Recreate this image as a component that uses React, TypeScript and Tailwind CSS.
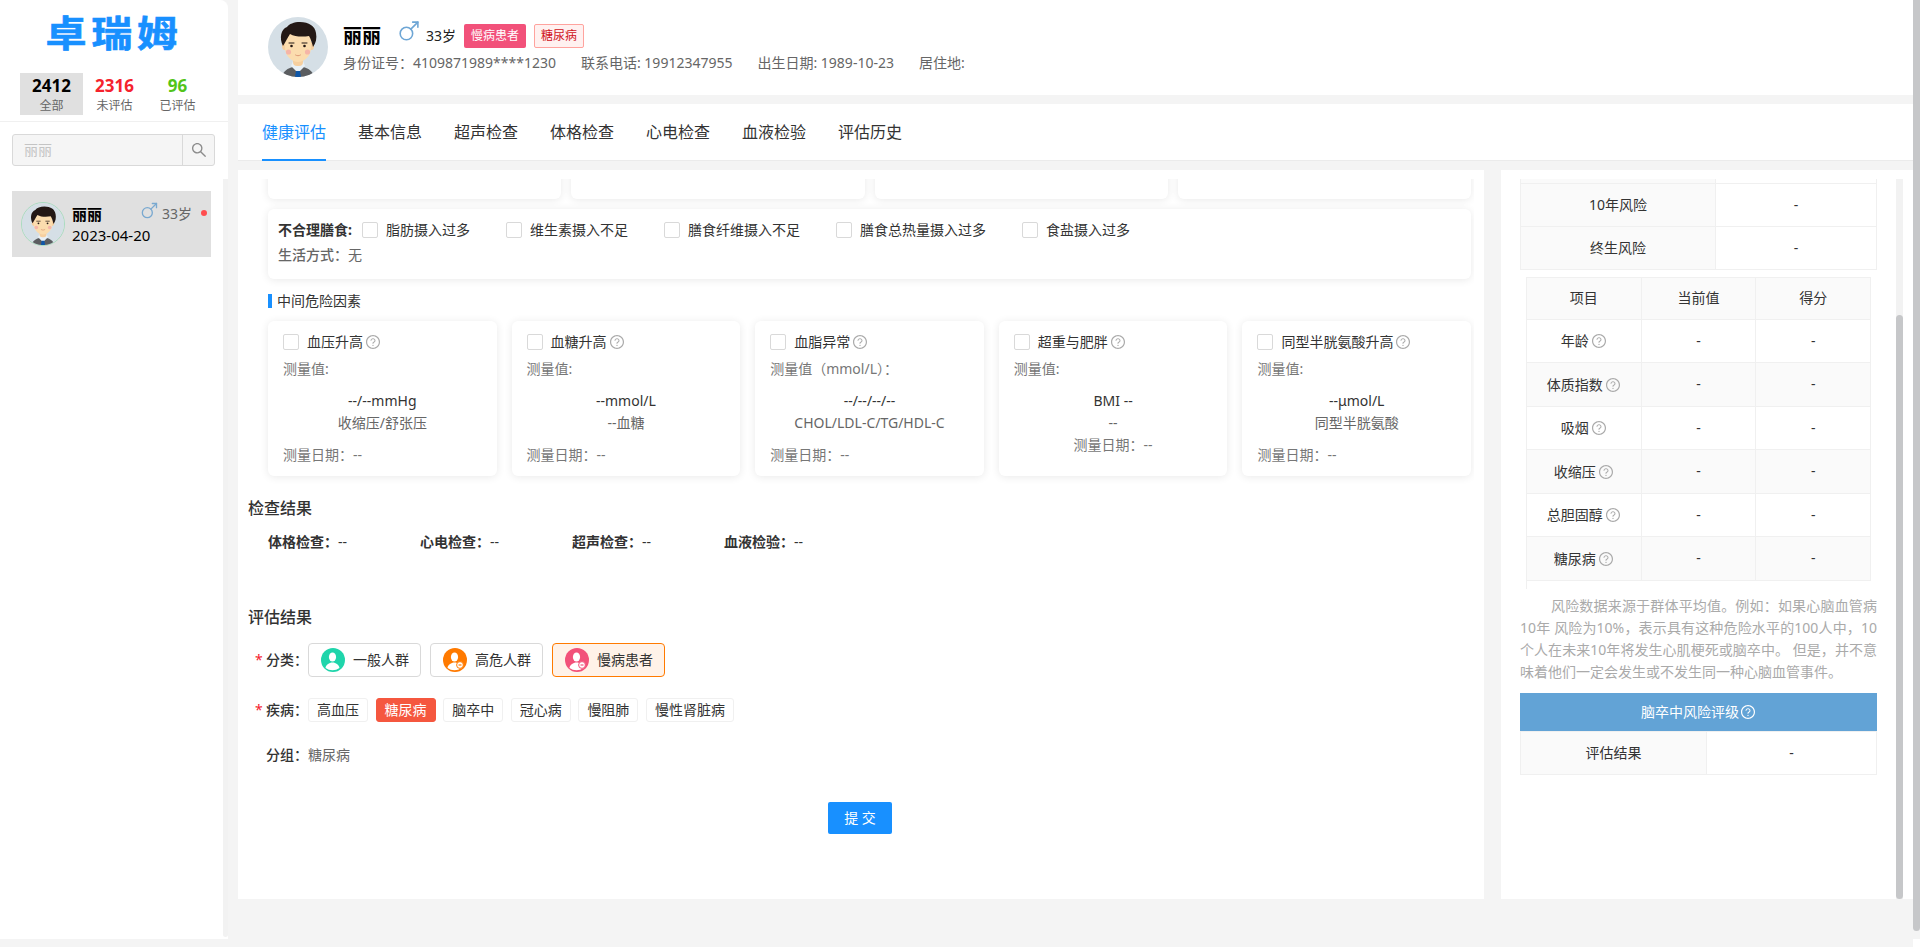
import { Mars } from "lucide-react";
import { AiOutlineQuestionCircle, AiOutlineSearch } from "react-icons/ai";

const dietItems = ["脂肪摄入过多", "维生素摄入不足", "膳食纤维摄入不足", "膳食总热量摄入过多", "食盐摄入过多"];

const riskCards = [
  { title: "血压升高", label: "测量值:", value: "--/--mmHg", sub: "收缩压/舒张压" },
  { title: "血糖升高", label: "测量值:", value: "--mmol/L", sub: "--血糖" },
  { title: "血脂异常", label: "测量值（mmol/L）：", value: "--/--/--/--", sub: "CHOL/LDL-C/TG/HDL-C" },
  { title: "超重与肥胖", label: "测量值:", value: "BMI --", sub: "--", centered: true },
  { title: "同型半胱氨酸升高", label: "测量值:", value: "--μmol/L", sub: "同型半胱氨酸" },
];

const checks = ["体格检查", "心电检查", "超声检查", "血液检验"];
const diseases = ["高血压", "糖尿病", "脑卒中", "冠心病", "慢阻肺", "慢性肾脏病"];
const tabs = ["健康评估", "基本信息", "超声检查", "体格检查", "心电检查", "血液检验", "评估历史"];
const scoreRows = ["年龄", "体质指数", "吸烟", "收缩压", "总胆固醇", "糖尿病"];

function Avatar({ className }: { className: string }) {
  return (
    <svg viewBox="0 0 60 60" className={className}>
      <defs>
        <clipPath id="avatar-clip">
          <circle cx="30" cy="30" r="30" />
        </clipPath>
      </defs>
      <g clipPath="url(#avatar-clip)">
        <rect width="60" height="60" fill="#d5dfe6" />
        <path d="M14 60c1-6 6-9 11-10h10c5 1 10 4 11 10z" fill="#5b5d60" />
        <path d="M23 49l7 7 7-7-2-5H25z" fill="#e8f0f6" />
        <path d="M28 54h4l1 6h-6z" fill="#0f57a8" />
        <rect x="25" y="38" width="10" height="11" rx="4" fill="#f6cf9f" />
        <ellipse cx="16.5" cy="29" rx="2.5" ry="4" fill="#f6cf9f" />
        <ellipse cx="43.5" cy="29" rx="2.5" ry="4" fill="#f6cf9f" />
        <path d="M17 23c0-6 6-9 13-9s13 3 13 9v8c0 8-7 14-13 14S17 39 17 31z" fill="#fbdcae" />
        <path d="M15 29C11 21 13 12 19 10c2-3 7-5 13-5 9 0 15 4 16 11 1 5 0 10-3 14-1-4-2-8-4-11-6 1-14 1-19-2-2 3-4 7-7 12z" fill="#231815" />
        <path d="M21 26h5M34 26h5" stroke="#231815" strokeWidth="1" strokeLinecap="round" />
        <circle cx="23.5" cy="29" r="1.3" fill="#231815" />
        <circle cx="36.5" cy="29" r="1.3" fill="#231815" />
        <circle cx="20.5" cy="35" r="2.6" fill="#f5b5a8" />
        <circle cx="39.5" cy="35" r="2.6" fill="#f5b5a8" />
        <path d="M27.5 38c1.5 1 3.5 1 5 0" stroke="#d68a6a" strokeWidth="0.8" fill="none" strokeLinecap="round" />
      </g>
    </svg>
  );
}

function HelpIcon({ className = "text-[#aaaaaa]" }: { className?: string }) {
  return <AiOutlineQuestionCircle className={`w-4 h-4 shrink-0 ${className}`} />;
}

function Checkbox() {
  return <span className="w-4 h-4 shrink-0 bg-white border border-[#d9d9d9] rounded-[2px]" />;
}

function PersonIcon({ color, badge }: { color: string; badge?: string }) {
  return (
    <svg viewBox="0 0 24 24" className="w-6 h-6 shrink-0">
      <circle cx="12" cy="12" r="12" fill={color} />
      <ellipse cx="11.5" cy="9" rx="3.6" ry="4.6" fill="#fff" />
      <path d="M4.5 20c.5-3.5 3.5-4.5 5.5-5.5h3c2 1 5 2 5.5 5.5a12 12 0 0 1-14 0z" fill="#fff" />
      {badge && <circle cx="17" cy="17" r="3.4" fill="#fff" stroke={color} strokeWidth="1" />}
      {badge && <path d="M15.5 17h3" stroke={color} strokeWidth="1.2" />}
    </svg>
  );
}

function Sidebar() {
  return (
    <aside className="w-[228px] shrink-0 bg-white rounded-tr-lg flex flex-col">
      <div className="h-[73px] flex items-center justify-center pb-[6px]">
        <span className="text-[36px] leading-none font-bold text-[#1890ff] tracking-[4px] scale-x-[1.14] [-webkit-text-stroke:0.6px_#1890ff]">卓瑞姆</span>
      </div>
      <div className="h-[49px] px-5 border-b border-[#f0f0f0]">
        <div className="grid grid-cols-[63px_63px_63px] text-center h-[42px]">
          <div className="bg-[#e0e0e0]">
            <div className="text-[17px] leading-[22px] pt-[2px] font-bold text-black">2412</div>
            <div className="text-xs leading-[18px] text-[#666666]">全部</div>
          </div>
          <div>
            <div className="text-[17px] leading-[22px] pt-[2px] font-bold text-[#f5222d]">2316</div>
            <div className="text-xs leading-[18px] text-[#666666]">未评估</div>
          </div>
          <div>
            <div className="text-[17px] leading-[22px] pt-[2px] font-bold text-[#52c41a]">96</div>
            <div className="text-xs leading-[18px] text-[#666666]">已评估</div>
          </div>
        </div>
      </div>
      <div className="h-[57px] pl-3 pr-[13px] pt-3">
        <div className="h-[32px] flex bg-[#f5f5f5] border border-[#d9d9d9] rounded-[3px]">
          <span className="flex-1 pl-[11px] text-sm leading-[30px] text-[#c4c4c4]">丽丽</span>
          <span className="w-[32px] border-l border-[#d9d9d9] flex items-center justify-center">
            <AiOutlineSearch className="w-[18px] h-[18px] text-[#8c8c8c]" />
          </span>
        </div>
      </div>
      <div className="flex-1 flex">
        <div className="flex-1 pt-[12px] pl-3 pr-3">
          <div className="h-[66px] w-[199px] bg-[#e0e0e0] flex items-center pl-[9px] pr-1">
            <div className="w-[44px] h-[44px] rounded-full border border-[#a9dcc0] shrink-0">
              <Avatar className="w-full h-full" />
            </div>
            <div className="flex-1 ml-[7px]">
              <div className="flex items-center h-[22px]">
                <span className="text-[15px] font-bold text-black">丽丽</span>
                <Mars size={20} strokeWidth={1.6} className="ml-auto -mt-[6px] text-[#7aa9d0]" />
                <span className="ml-[3px] text-sm text-[#666666]">33岁</span>
                <span className="ml-[9px] w-[6px] h-[6px] rounded-full bg-[#ff4d4f] -mt-[3px]" />
              </div>
              <div className="text-[15px] leading-[20px] text-black">2023-04-20</div>
            </div>
          </div>
        </div>
        <div className="w-[5px] bg-[#f2f2f2] mb-[2px] rounded-b-sm" />
      </div>
    </aside>
  );
}

function PatientHeader() {
  return (
    <header className="h-[95px] bg-white flex pl-[30px] pt-[17px]">
      <Avatar className="w-[60px] h-[60px] shrink-0" />
      <div className="ml-[15px] pt-[7px]">
        <div className="flex items-center h-[24px]">
          <span className="text-[19px] font-bold text-black">丽丽</span>
          <Mars size={25} strokeWidth={1.5} className="ml-[15px] -mt-[9px] text-[#6ea6d5]" />
          <span className="ml-[5px] text-sm text-[#222222]">33岁</span>
          <span className="ml-2 w-[62px] h-[24px] bg-[#f2517a] rounded-[2px] text-xs leading-[24px] text-white text-center">慢病患者</span>
          <span className="ml-2 w-[50px] h-[24px] bg-[#fff1f0] border border-[#ffa39e] rounded-[2px] text-xs leading-[22px] text-[#cf1322] text-center">糖尿病</span>
        </div>
        <div className="mt-[5px] flex gap-[25px] text-sm leading-5 text-[#666666]">
          <span>身份证号：4109871989****1230</span>
          <span>联系电话: 19912347955</span>
          <span>出生日期: 1989-10-23</span>
          <span>居住地:</span>
        </div>
      </div>
    </header>
  );
}

function Tabs() {
  return (
    <nav className="mt-[9px] h-[57px] bg-white border-b border-[#ebebeb] flex gap-8 pl-6">
      {tabs.map((tab, i) => (
        <div
          key={tab}
          className={
            i === 0
              ? "h-[57px] flex items-center text-base text-[#1890ff] border-b-2 border-[#1890ff]"
              : "h-[56px] flex items-center text-base text-[#333333]"
          }
        >
          {tab}
        </div>
      ))}
    </nav>
  );
}

function RiskCard({ card }: { card: (typeof riskCards)[number] }) {
  return (
    <div className="h-[155px] bg-white rounded-md shadow-[0_1px_8px_rgba(0,0,0,0.09)] pt-[13px] pl-[15px]">
      <div className="flex items-center h-4">
        <Checkbox />
        <span className="ml-2 text-sm text-[#333333]">{card.title}</span>
        <span className="ml-[2px]">
          <HelpIcon />
        </span>
      </div>
      <div className="mt-[9px] h-5 text-sm leading-5 text-[#777777]">{card.label}</div>
      <div className="-ml-[15px] mt-3 text-center text-sm leading-5 text-[#333333]">{card.value}</div>
      <div className="-ml-[15px] mt-[2px] text-center text-sm leading-5 text-[#666666]">{card.sub}</div>
      {card.centered ? (
        <div className="-ml-[15px] mt-[2px] text-center text-sm leading-5 text-[#777777]">测量日期：--</div>
      ) : (
        <div className="mt-3 text-sm leading-5 text-[#777777]">测量日期：--</div>
      )}
    </div>
  );
}

function AssessmentPanel() {
  return (
    <section className="w-[1246px] bg-white pt-[9px] px-[10px]">
      <div className="h-[720px] overflow-hidden">
        <div className="pl-5 pr-[3px]">
          <div className="grid grid-cols-4 gap-[10px] h-5">
            {[0, 1, 2, 3].map((n) => (
              <div key={n} className="h-[40px] -mt-5 bg-white rounded-md shadow-[0_1px_8px_rgba(0,0,0,0.09)]" />
            ))}
          </div>
          <div className="mt-[10px] h-[70px] bg-white rounded-md shadow-[0_1px_8px_rgba(0,0,0,0.09)] pt-[11px] pl-[10px]">
            <div className="flex items-center h-5 text-sm text-[#333333]">
              <span className="w-[84px] font-bold">不合理膳食:</span>
              {dietItems.map((item) => (
                <span key={item} className="flex items-center mr-9">
                  <Checkbox />
                  <span className="ml-2">{item}</span>
                </span>
              ))}
            </div>
            <div className="mt-[5px] h-5 text-sm leading-5 text-[#666666]">
              <span className="font-medium">生活方式：</span>无
            </div>
          </div>
          <div className="mt-[15px] flex items-center h-[14px]">
            <span className="w-1 h-[14px] bg-[#1890ff]" />
            <span className="ml-[5px] text-sm text-[#333333]">中间危险因素</span>
          </div>
          <div className="mt-[13px] grid grid-cols-5 gap-[15px]">
            {riskCards.map((card) => (
              <RiskCard key={card.title} card={card} />
            ))}
          </div>
        </div>

        <h2 className="mt-5 h-6 text-base leading-6 font-medium text-[#333333]">检查结果</h2>
        <div className="mt-3 pl-5 flex h-5 text-sm leading-5 text-[#333333]">
          {checks.map((check) => (
            <span key={check} className="w-[152px]">
              <span className="font-bold">{check}：</span>--
            </span>
          ))}
        </div>

        <h2 className="mt-[53px] h-6 text-base leading-6 font-medium text-[#333333]">评估结果</h2>
        <div className="mt-[14px] flex items-center pl-[7px] h-[34px]">
          <span className="w-[11px] text-sm text-[#f5222d]">*</span>
          <span className="w-[42px] text-sm font-medium text-[#333333]">分类：</span>
          <div className="flex gap-[9px]">
            <div className="w-[113px] h-[34px] flex items-center pl-3 gap-2 bg-white border border-[#d9d9d9] rounded text-sm text-[#333333]">
              <PersonIcon color="#1fd5ab" />
              一般人群
            </div>
            <div className="w-[113px] h-[34px] flex items-center pl-3 gap-2 bg-white border border-[#d9d9d9] rounded text-sm text-[#333333]">
              <PersonIcon color="#ff7a00" badge="plus" />
              高危人群
            </div>
            <div className="w-[113px] h-[34px] flex items-center pl-3 gap-2 bg-[#fff2e8] border border-[#ff7a00] rounded text-sm text-[#333333]">
              <PersonIcon color="#f2517a" badge="minus" />
              慢病患者
            </div>
          </div>
        </div>
        <div className="mt-[21px] flex items-center pl-[7px] h-6">
          <span className="w-[11px] text-sm text-[#f5222d]">*</span>
          <span className="w-[42px] text-sm font-medium text-[#333333]">疾病：</span>
          <div className="flex gap-[7.6px]">
            {diseases.map((d) => (
              <span
                key={d}
                className={
                  d === "糖尿病"
                    ? "h-6 px-2 rounded-[3px] border border-[#f5573f] bg-[#f5573f] text-sm leading-[22px] text-white"
                    : "h-6 px-2 rounded-[3px] border border-[#f0f0f0] bg-white text-sm leading-[22px] text-[#333333]"
                }
              >
                {d}
              </span>
            ))}
          </div>
        </div>
        <div className="mt-[23px] flex h-5 pl-[18px] text-sm leading-5">
          <span className="w-[42px] font-medium text-[#333333]">分组：</span>
          <span className="text-[#666666]">糖尿病</span>
        </div>
        <div className="mt-[37px] flex justify-center pr-[2px]">
          <button className="w-16 h-8 bg-[#1890ff] rounded-[2px] text-sm text-white">提 交</button>
        </div>
      </div>
    </section>
  );
}

function RiskPanel() {
  const cell = "border border-[#f0f0f0] text-center text-sm font-normal text-[#333333]";
  return (
    <section className="w-[412px] bg-white flex pt-[9px] pl-[19px]">
      <div className="w-[357px] h-[720px] overflow-hidden">
        <table className="w-[357px] table-fixed border-collapse">
          <tbody>
            <tr className="h-1">
              <td className="w-[195px] border-x border-b border-[#f0f0f0] bg-[#fafafa]" />
              <td className="border-x border-b border-[#f0f0f0]" />
            </tr>
            <tr className="h-[43px]">
              <th className={`${cell} bg-[#fafafa]`}>10年风险</th>
              <td className={cell}>-</td>
            </tr>
            <tr className="h-[43px]">
              <th className={`${cell} bg-[#fafafa]`}>终生风险</th>
              <td className={cell}>-</td>
            </tr>
          </tbody>
        </table>

        <table className="ml-[6px] mt-[7px] w-[345px] table-fixed border-collapse">
          <thead>
            <tr className="h-[42px] bg-[#fafafa]">
              <th className={cell}>项目</th>
              <th className={cell}>当前值</th>
              <th className={cell}>得分</th>
            </tr>
          </thead>
          <tbody>
            {scoreRows.map((row, i) => (
              <tr key={row} className={i % 2 === 1 ? "h-[43.5px] bg-[#fafafa]" : "h-[43.5px]"}>
                <td className={cell}>
                  <span className="inline-flex items-center gap-[2px] align-middle">
                    {row}
                    <HelpIcon />
                  </span>
                </td>
                <td className={cell}>-</td>
                <td className={cell}>-</td>
              </tr>
            ))}
          </tbody>
        </table>
        <div className="ml-[6px] h-2 border-l border-[#f0f0f0]" />

        <p className="mt-[6px] text-sm leading-[22px] text-[#aaaaaa] text-justify indent-[31px]">
          风险数据来源于群体平均值。例如：如果心脑血管病10年 风险为10%，表示具有这种危险水平的100人中，10个人在未来10年将发生心肌梗死或脑卒中。 但是，并不意味着他们一定会发生或不发生同一种心脑血管事件。
        </p>

        <div className="mt-[10px] h-[38px] bg-[#62a3d6] flex items-center justify-center gap-[1px] text-sm text-white">
          脑卒中风险评级
          <HelpIcon className="text-white" />
        </div>
        <table className="w-[357px] table-fixed border-collapse">
          <tbody>
            <tr className="h-[43px]">
              <th className={`${cell} w-[186px] bg-[#fafafa]`}>评估结果</th>
              <td className={cell}>-</td>
            </tr>
          </tbody>
        </table>
      </div>
      <div className="ml-[19px] w-[7px] h-[720px] bg-[#f2f2f2] pt-[136px]">
        <div className="h-full bg-[#c6c7c9] rounded-t-sm rounded-b-sm" />
      </div>
    </section>
  );
}

export default function App() {
  return (
    <div className="w-[1920px] h-[947px] overflow-hidden flex flex-col bg-[#f4f4f4] font-['Noto_Sans','Noto_Sans_CJK_SC',sans-serif]">
      <div className="h-[939px] flex">
        <Sidebar />
        <main className="ml-[10px] w-[1675px] flex flex-col">
          <PatientHeader />
          <Tabs />
          <div className="mt-[9px] h-[729px] flex gap-[17px]">
            <AssessmentPanel />
            <RiskPanel />
          </div>
        </main>
        <div className="w-[7px] h-[939px] pb-2">
          <div className="h-full bg-[#c6c7c9] rounded-b-sm" />
        </div>
      </div>
      <div className="h-2 flex justify-end">
        <div className="w-[7px] bg-white" />
      </div>
    </div>
  );
}
